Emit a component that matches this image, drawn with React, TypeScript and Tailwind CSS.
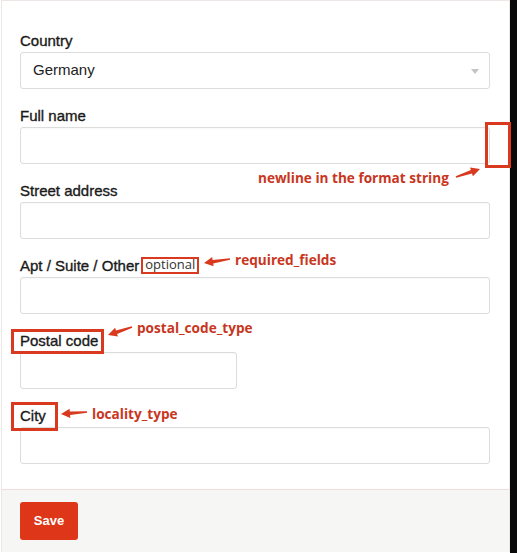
import type { ReactNode } from 'react'

const ANNOT = '#c8361e'
const BOX = '#d8391f'

function Field({ label, children }: { label: ReactNode; children: ReactNode }) {
  return (
    <div className="flex flex-col">
      <div className="h-[19px] text-[15px] leading-[16px] text-[#1a1a1a] [-webkit-text-stroke:0.35px_#1a1a1a]">{label}</div>
      {children}
    </div>
  )
}

function TextInput({ className = 'w-full' }: { className?: string }) {
  return (
    <input
      type="text"
      className={`h-[37px] rounded-[3px] border border-[#dcdcdc] bg-white px-3 text-[15px] outline-none shadow-[inset_0_1px_0_rgba(0,0,0,0.02)] ${className}`}
    />
  )
}

// tapered arrow pointing from (x1,y1) to (x2,y2)
function arrowPoints(x1: number, y1: number, x2: number, y2: number) {
  const dx = x2 - x1
  const dy = y2 - y1
  const len = Math.hypot(dx, dy)
  const ux = dx / len
  const uy = dy / len
  const nx = -uy
  const ny = ux
  const head = 9
  const bx = x2 - ux * head
  const by = y2 - uy * head
  const p = (x: number, y: number) => `${x.toFixed(1)},${y.toFixed(1)}`
  return [
    p(x1 + nx * 0.8, y1 + ny * 0.8),
    p(bx + nx * 1.8, by + ny * 1.8),
    p(bx + nx * 4.6, by + ny * 4.6),
    p(x2, y2),
    p(bx - nx * 4.6, by - ny * 4.6),
    p(bx - nx * 1.8, by - ny * 1.8),
    p(x1 - nx * 0.8, y1 - ny * 0.8),
  ].join(' ')
}

const arrows = [
  [230, 259, 204, 263],
  [132, 327, 108, 335],
  [87, 412, 61, 414],
  [456, 177, 480, 169],
]

function Note({ className, children }: { className: string; children: ReactNode }) {
  return (
    <span
      className={`absolute whitespace-nowrap text-[13.6px] font-bold leading-[18px] ${className}`}
      style={{ fontFamily: '"Open Sans", "DejaVu Sans", sans-serif', color: ANNOT }}
    >
      {children}
    </span>
  )
}

export default function App() {
  return (
    <div
      className="relative flex h-[553px] w-[517px] overflow-hidden bg-white"
      style={{ fontFamily: '"Liberation Sans", Arial, sans-serif' }}
    >
      {/* card */}
      <div className="ml-px flex h-[552px] w-[509px] flex-col border border-[#ece6e4] bg-white">
        <div className="flex flex-1 flex-col gap-[19px] pl-[18px] pr-[19px] pt-[32px]">
          <Field label="Country">
            <div className="relative flex h-[37px] w-full items-center rounded-[3px] border border-[#dcdcdc] bg-white pl-[12px] text-[15px] text-[#222]">
              Germany
              <span className="absolute right-[10px] top-[16px] h-0 w-0 border-x-[4px] border-t-[5px] border-x-transparent border-t-[#c4c4c4]" />
            </div>
          </Field>
          <Field label="Full name">
            <TextInput />
          </Field>
          <Field label="Street address">
            <TextInput />
          </Field>
          <Field
            label={
              <span className="flex items-start">
                Apt / Suite / Other
                <span
                  className="ml-[2px] mt-[-1px] flex h-[17px] w-[58px] items-end justify-center border-2 pb-px text-[13px] leading-[13px] text-[#333] [-webkit-text-stroke:0px]"
                  style={{ borderColor: BOX, fontFamily: '"Open Sans", sans-serif' }}
                >
                  optional
                </span>
              </span>
            }
          >
            <TextInput />
          </Field>
          <Field label="Postal code">
            <TextInput className="w-[217px]" />
          </Field>
          <Field label="City">
            <TextInput />
          </Field>
        </div>
        <div className="mt-[25px] border-t border-[#f0dedb] bg-[#f6f6f5] px-[18px] py-[12px]">
          <button className="h-[38px] w-[58px] rounded-[3px] bg-[#de3618] text-[13px] font-bold text-white">
            Save
          </button>
        </div>
      </div>
      <div className="ml-auto w-[7px] bg-[#0a0a0a]" />

      {/* annotations */}
      <div className="pointer-events-none absolute left-[485px] top-[122px] h-[46px] w-[26px] border-[3px]" style={{ borderColor: BOX }} />
      <div className="pointer-events-none absolute left-[11px] top-[329px] h-[25px] w-[93px] border-[3px]" style={{ borderColor: BOX }} />
      <div className="pointer-events-none absolute left-[11px] top-[402px] h-[29px] w-[47px] border-[3px]" style={{ borderColor: BOX }} />

      <Note className="left-[258px] top-[169px]">newline in the format string</Note>
      <Note className="left-[235px] top-[251px]">required_fields</Note>
      <Note className="left-[137px] top-[319px]">postal_code_type</Note>
      <Note className="left-[92px] top-[405px]">locality_type</Note>

      <svg className="pointer-events-none absolute inset-0" width={517} height={553}>
        {arrows.map(([x1, y1, x2, y2], i) => (
          <polygon key={i} points={arrowPoints(x1, y1, x2, y2)} fill={BOX} />
        ))}
      </svg>
    </div>
  )
}
